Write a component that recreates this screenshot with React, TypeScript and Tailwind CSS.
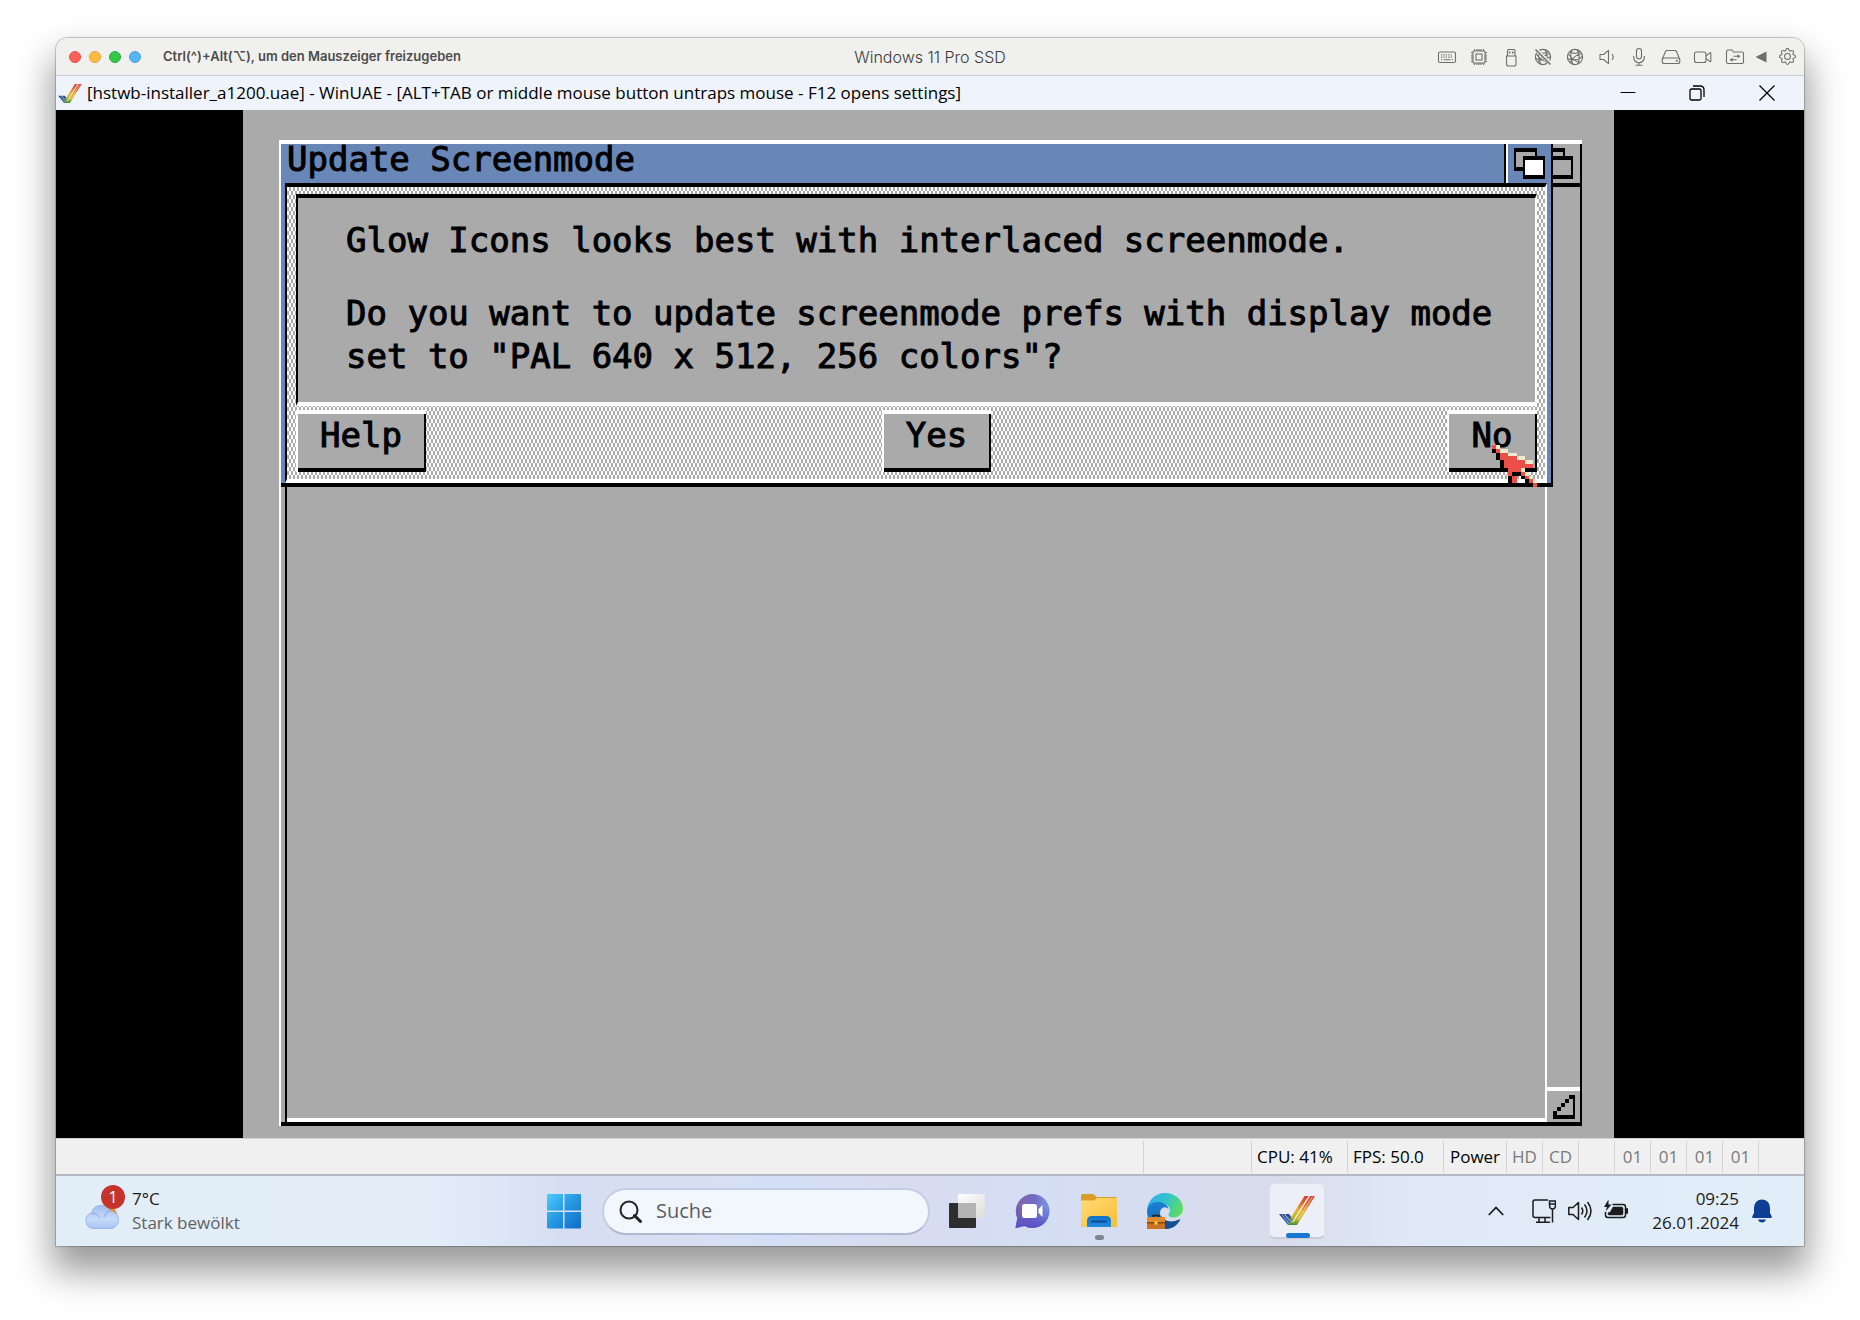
import React from "react";
import { BsGear } from "react-icons/bs";

const STATUS_CELLS = [
  { id: "spare", text: "", cls: "w-[108px]" },
  { id: "cpu", text: "CPU: 41%", cls: "w-24 pl-[5px] text-black" },
  { id: "fps", text: "FPS: 50.0", cls: "w-24 pl-[5px] text-black" },
  { id: "power", text: "Power", cls: "w-[63px] justify-center text-black" },
  { id: "hd", text: "HD", cls: "w-9 justify-center text-[#7a7a7a]" },
  { id: "cd", text: "CD", cls: "w-9 justify-center text-[#7a7a7a]" },
  { id: "gap", text: "", cls: "w-9" },
  { id: "df0", text: "01", cls: "w-9 justify-center text-[#7a7a7a]" },
  { id: "df1", text: "01", cls: "w-9 justify-center text-[#7a7a7a]" },
  { id: "df2", text: "01", cls: "w-9 justify-center text-[#7a7a7a]" },
  { id: "df3", text: "01", cls: "w-9 justify-center text-[#7a7a7a]" },
  { id: "end", text: "", cls: "w-[46px]" },
];

// k = black, r = red, c = cream
const POINTER = [
  "rc",
  "krcc",
  ".krrcc",
  ".krrrrcc",
  "..krrrrrcc",
  "..krrrrrrr",
  "...krrrc",
  "....rkkrc",
  "....kr.krc",
  "....kr..krc",
  "....k....kr",
];
const POINTER_FILL: any = { k: "#000", r: "#eb4f48", c: "#eeeacb" };

const MousePointer = () => (
  <svg
    className="absolute top-[35px] left-[45px] z-20 pointer-events-none"
    width="45"
    height="42"
    viewBox="0 0 11 11"
    preserveAspectRatio="none"
    shapeRendering="crispEdges"
  >
    {POINTER.map((row, y) =>
      row.split("").map((p, x) =>
        p === "." ? null : (
          <rect key={`${x}-${y}`} x={x} y={y} width="1" height="1" fill={POINTER_FILL[p]} />
        ),
      ),
    )}
  </svg>
);

const AmigaCheck = ({ id, className }: { id: string; className: string }) => (
  <svg className={className} viewBox="0 0 36 29">
    <defs>
      <linearGradient id={`${id}-r`} x1="0" y1="0" x2="0" y2="1">
        <stop offset="0" stopColor="#d63a2f" />
        <stop offset="0.3" stopColor="#e0702f" />
        <stop offset="0.55" stopColor="#e2b62f" />
        <stop offset="0.8" stopColor="#c9b62c" />
        <stop offset="1" stopColor="#3f8f2c" />
      </linearGradient>
      <linearGradient id={`${id}-l`} x1="0" y1="0" x2="1" y2="1">
        <stop offset="0" stopColor="#27307a" />
        <stop offset="0.6" stopColor="#2f62a8" />
        <stop offset="1" stopColor="#2f8a5a" />
      </linearGradient>
    </defs>
    <path d="M0 18h5l9 11h-5z" fill={`url(#${id}-l)`} />
    <path d="M6 18h4l4 5-2 3z" fill={`url(#${id}-l)`} />
    <path d="M25.500 0h4L13 26l-2-3z" fill={`url(#${id}-r)`} />
    <path d="M31 0h5L18 29H9l3-3h2z" fill={`url(#${id}-r)`} />
    <path d="M2.500 18l8 10M30.200 0.500L14 26.500M33.500 0.500L19 24" stroke="#fff" strokeWidth="0.700" fill="none" opacity="0.700" />
  </svg>
);

const GLOBE = (
  <>
    <circle cx="10" cy="10" r="7.600" />
    <path d="M4.500 5c2 1 4 1.500 6 1.300 2.200-.2 4-1 5.400-2M2.500 11.500c3 1.500 6 1.800 9 1 2.500-.6 4.600-1.700 6-3.200M7 3c-1.800 4-1.500 9.500 1 14.400M12 2.700c2.500 4 2.800 9 .8 14M3.500 7c3 4.500 7 7.600 12 8.300M16.800 6.800c-4 .5-9 3.700-11.800 8.800" />
  </>
);

const BAR_ICONS = [
  {
    label: "Tastatur",
    art: (
      <>
        <rect x="1.500" y="5" width="17" height="10.500" rx="1.500" />
        <path d="M4 7.800h12M4 10.200h12" strokeDasharray="1.200 1.200" strokeWidth="1.300" />
        <path d="M4 12.800h1.200M6.500 12.800h7M14.800 12.800h1.200" />
      </>
    ),
  },
  {
    label: "Prozessor",
    art: (
      <>
        <rect x="4" y="4" width="12" height="12" rx="1" />
        <rect x="7" y="7" width="6" height="6" />
        <path d="M5.500 2v2M8 2v2M10 2v2M12 2v2M14.500 2v2M5.500 16v2M8 16v2M10 16v2M12 16v2M14.500 16v2M2 5.500h2M2 8h2M2 10h2M2 12h2M2 14.500h2M16 5.500h2M16 8h2M16 10h2M16 12h2M16 14.500h2" />
      </>
    ),
  },
  {
    label: "USB",
    art: (
      <>
        <path d="M6.500 9V3.500a1 1 0 0 1 1-1h5.500a1 1 0 0 1 1 1V9" />
        <path d="M8.700 4.500v2M11.800 4.500v2" strokeWidth="1.600" />
        <path d="M5.500 9h9.500v8a2 2 0 0 1-2 2H7.500a2 2 0 0 1-2-2z" />
      </>
    ),
  },
  {
    label: "Netzwerk getrennt",
    art: (
      <>
        {GLOBE}
        <path d="M3 2.500l15 15" stroke="#f0f0ee" strokeWidth="3.500" />
        <path d="M2.500 2.500l15 15" strokeWidth="1.500" />
      </>
    ),
  },
  { label: "Netzwerk", art: GLOBE },
  {
    label: "Ton",
    art: (
      <>
        <path d="M3 7.500h3.500L11.500 3.300v13.400L6.500 12.500H3z" strokeLinejoin="round" />
        <path d="M15 7c1.600 2 1.600 4 0 6" />
      </>
    ),
  },
  {
    label: "Mikrofon",
    art: (
      <>
        <rect x="7.500" y="1.500" width="5" height="10.500" rx="2.500" />
        <path d="M4.700 9v1.500a5.300 5.300 0 0 0 10.600 0V9M10 15.800v2.500M6.500 18.300h7" />
      </>
    ),
  },
  {
    label: "Festplatte",
    art: (
      <>
        <path d="M1.200 12.500L4.500 4.500q.4-1 1.500-1h8q1.100 0 1.500 1l3.300 8" />
        <rect x="1.200" y="11" width="17.600" height="5.500" rx="2" />
        <circle cx="15.800" cy="13.800" r="0.500" />
      </>
    ),
  },
  {
    label: "Kamera",
    art: (
      <>
        <rect x="1.500" y="5" width="11.500" height="10.500" rx="2" />
        <path d="M13 9l4-3.300q.8-.4.800.5v8q0 .9-.8.400L13 11.500" />
      </>
    ),
  },
  {
    label: "Freigegebene Ordner",
    art: (
      <>
        <path d="M1.500 15V4.500q0-1.500 1.500-1.500h4l1.500 2H17q1.500 0 1.500 1.500V15q0 1.500-1.500 1.500H3Q1.500 16.500 1.500 15z" />
        <path d="M8.500 9.300h5.500M6 12.700h5.500" />
        <path d="M12.500 7.300l3 2-3 2zM7.500 10.700l-3 2 3 2z" fill="#6e6e6c" strokeWidth="0" />
      </>
    ),
  },
];

const DepthGadget = ({ front, back }: { front: string; back: string }) => (
  <svg width="31" height="31" viewBox="0 0 31 31" shapeRendering="crispEdges">
    <rect width="23" height="23" fill="#000" />
    <rect x="2" y="4" width="19" height="15" fill={back} />
    <rect x="9" y="8" width="22" height="23" fill="#000" />
    <rect x="11" y="12" width="18" height="15" fill={front} />
  </svg>
);

const MacBar = () => (
  <header className="flex h-[38px] shrink-0 items-center border-b border-[#c9ccd3] bg-[#f0f0ee] font-['Inter',sans-serif]">
    <div className="flex flex-1 items-center">
      <div className="ml-[13px] flex gap-2">
        <button aria-label="Schließen" className="size-3 rounded-full border border-[#e0544d] bg-[#fe5f57]" />
        <button aria-label="Minimieren" className="size-3 rounded-full border border-[#e0a63a] bg-[#fdbd41]" />
        <button aria-label="Vollbild" className="size-3 rounded-full border border-[#2cab3c] bg-[#34c84a]" />
        <button aria-label="Coherence" className="size-3 rounded-full border border-[#4aa2dd] bg-[#55b5f5]" />
      </div>
      <span className="pl-[22px] text-[13px] font-semibold whitespace-nowrap text-[#4b4b49]">
        Ctrl(^)+Alt(⌥), um den Mauszeiger freizugeben
      </span>
    </div>
    <h1 className="text-base font-light text-[#3c3c3c]">Windows 11 Pro SSD</h1>
    <div className="flex flex-1 items-center justify-end text-[#6e6e6c]">
      {BAR_ICONS.map((i) => (
        <button key={i.label} aria-label={i.label} className="flex w-8 justify-center">
          <svg className="size-5" viewBox="0 0 20 20" fill="none" stroke="currentColor" strokeWidth="1.100">
            {i.art}
          </svg>
        </button>
      ))}
      <button aria-label="Einklappen" className="flex w-5 justify-center">
        <svg className="size-3" viewBox="0 0 12 12">
          <path d="M0.500 6L11.500 0.500v11z" fill="currentColor" />
        </svg>
      </button>
      <button aria-label="Einstellungen" className="mr-px flex w-8 justify-center">
        <BsGear className="size-[17px]" />
      </button>
    </div>
  </header>
);

const UaeTitleBar = () => (
  <div className="flex h-[34px] shrink-0 items-center justify-between bg-[#eff3fb]">
    <div className="flex items-center gap-[5px] pl-[2px]">
      <AmigaCheck id="title" className="h-[19px] w-6" />
      <h2 className="text-[17px] leading-6 whitespace-nowrap text-black">
        [hstwb-installer_a1200.uae] - WinUAE - [ALT+TAB or middle mouse button untraps mouse - F12 opens settings]
      </h2>
    </div>
    <div className="flex pr-[2px] text-black">
      <button aria-label="Minimieren" className="flex h-8 w-[69px] items-center justify-center">
        <svg width="16" height="16" viewBox="0 0 16 16" stroke="currentColor"><path d="M0.500 7.500h15" /></svg>
      </button>
      <button aria-label="Wiederherstellen" className="flex h-8 w-[70px] items-center justify-center">
        <svg width="16" height="16" viewBox="0 0 16 16" fill="none" stroke="currentColor" strokeWidth="1.300">
          <rect x="1" y="4" width="11" height="11" rx="1.500" />
          <path d="M4 1h7.500A3.500 3.500 0 0 1 15 4.500V12" />
        </svg>
      </button>
      <button aria-label="Schließen" className="flex h-8 w-[70px] items-center justify-center">
        <svg width="16" height="16" viewBox="0 0 16 16" stroke="currentColor" strokeWidth="1.300"><path d="M0.500 0.500l15 15M15.500 0.500l-15 15" /></svg>
      </button>
    </div>
  </div>
);

const AmigaButton = ({ children, className }: { children: React.ReactNode; className: string }) => (
  <div className={`relative ${className}`}>
    <button className="flex h-[62px] w-full border-t-4 border-l-2 border-white leading-[43px]">
      <span className="flex h-full flex-1 justify-center border-r-2 border-b-4 border-black bg-[#aaaaaa]">
        {children}
      </span>
    </button>
    {children === "No" && <MousePointer />}
  </div>
);

const Requester = () => (
  <section
    role="dialog"
    aria-label="Update Screenmode"
    className="absolute -top-1 right-[29px] -left-[2px] border-t-4 border-l-2 border-white bg-[#6887b7]"
  >
    <div className="border-r-2 border-b-4 border-black">
      <div className="flex h-[39px] justify-between">
        <h3 className="pl-[6px] leading-[31px]">Update Screenmode</h3>
        <button aria-label="Depth" className="flex border-l-2 border-black">
          <span className="flex h-full w-[45px] border-l-2 border-white pt-1 pl-[6px]">
            <DepthGadget back="#aaaaaa" front="#ffffff" />
          </span>
        </button>
      </div>
      <div className="mr-1 ml-1 border-t-4 border-r-2 border-b-4 border-l-2 border-t-black border-r-white border-b-white border-l-black bg-[conic-gradient(#aaaaaa_25%,#ffffff_0_50%,#aaaaaa_0_75%,#ffffff_0)] bg-[length:4px_8px] pt-[7px] pr-2 pb-[7px] pl-[9px]">
        <div className="mb-1 border-t-4 border-r-2 border-b-4 border-l-2 border-t-black border-r-white border-b-white border-l-black bg-[#aaaaaa] pt-[21px] pb-6 pl-12 leading-[43px]">
          <p>Glow Icons looks best with interlaced screenmode.</p>
          <p className="pt-[30px]">
            Do you want to update screenmode prefs with display mode
            <br />
            set to "PAL 640 x 512, 256 colors"?
          </p>
        </div>
        <div className="flex justify-between">
          <AmigaButton className="w-[130px]">Help</AmigaButton>
          <AmigaButton className="w-[109px]">Yes</AmigaButton>
          <AmigaButton className="w-[90px]">No</AmigaButton>
        </div>
      </div>
    </div>
  </section>
);

const AmigaScreen = () => (
  <main className="flex min-h-0 flex-1 bg-black pr-[190px] pl-[187px]">
    <div className="flex flex-1 bg-[#aaaaaa] pt-[30px] pr-8 pb-3 pl-9 font-['DejaVu_Sans_Mono',monospace] text-[34px] whitespace-nowrap text-black [-webkit-text-stroke:1px_black]">
      <div className="relative flex flex-1 border-t-4 border-l-2 border-white">
        <div className="flex flex-1 flex-col border-r-2 border-b-4 border-black">
          <div className="flex h-[43px] shrink-0 justify-end border-b-4 border-black pt-1 pr-[7px]">
            <DepthGadget back="#aaaaaa" front="#aaaaaa" />
          </div>
          <div className="flex flex-1 pl-1">
            <div className="flex flex-1 border-l-2 border-black">
              <div className="flex-1 border-r-2 border-b-4 border-white" />
            </div>
            <div className="flex w-[33px] flex-col justify-end">
              <button aria-label="Size" className="flex h-[35px] justify-center border-t-4 border-white pt-1">
                <svg width="22" height="24" viewBox="0 0 22 24" shapeRendering="crispEdges">
                  <path d="M16 0h6v24H0v-8h4v-4h4v-4h4V4h4zM16 4h4v16H4v-4h4v-4h4V8h4z" fill="#000" fillRule="evenodd" />
                </svg>
              </button>
            </div>
          </div>
        </div>
        <Requester />
      </div>
    </div>
  </main>
);

const StatusBar = () => (
  <div className="flex h-[38px] shrink-0 justify-end border-t border-b-2 border-t-[#d0d0d0] border-b-[#b2b9c4] bg-[#f0f0f0] pt-[2px] pb-px text-[17px]">
    {STATUS_CELLS.map((c) => (
      <div key={c.id} className={`flex items-center border-l border-[#d4d4d4] whitespace-nowrap ${c.cls}`}>
        {c.text}
      </div>
    ))}
  </div>
);

const WeatherIcon = () => (
  <svg className="h-10 w-10" viewBox="0 0 40 40">
    <defs>
      <linearGradient id="cloud" x1="0" y1="0" x2="0" y2="1">
        <stop offset="0" stopColor="#9dbcf0" />
        <stop offset="0.600" stopColor="#c8dbf7" />
        <stop offset="1" stopColor="#a9c4f4" />
      </linearGradient>
    </defs>
    <circle cx="25" cy="24" r="9" fill="#f28a1e" />
    <path d="M9.500 37.500a8 8 0 0 1-1-15.500 10 10 0 0 1 18.500-2.500 9.200 9.200 0 0 1 2 18z" fill="url(#cloud)" stroke="#8eabe6" strokeWidth="0.800" />
    <path d="M8.500 22.500a8 8 0 0 1 8 4M21 26a8.500 8.500 0 0 1 6-6" fill="none" stroke="#86a4e0" strokeWidth="0.900" />
  </svg>
);

const TaskViewIcon = () => (
  <svg className="size-9" viewBox="0 0 36 36">
    <defs>
      <linearGradient id="tv" x1="0" y1="0" x2="1" y2="1">
        <stop offset="0" stopColor="#ffffff" />
        <stop offset="1" stopColor="#dcdcdc" />
      </linearGradient>
    </defs>
    <rect x="0" y="10" width="27" height="25" rx="1" fill="#2e2e2e" />
    <rect x="9" y="1" width="27" height="24" rx="1" fill="url(#tv)" />
    <rect x="9" y="10" width="18" height="15" fill="#b4b4b4" />
  </svg>
);

const ChatIcon = () => (
  <svg className="size-9" viewBox="0 0 36 36">
    <defs>
      <linearGradient id="chat" x1="0" y1="0" x2="1" y2="0.300">
        <stop offset="0" stopColor="#8a62a8" />
        <stop offset="0.550" stopColor="#6f6bc4" />
        <stop offset="1" stopColor="#7d9ae8" />
      </linearGradient>
      <linearGradient id="chat2" x1="0" y1="0" x2="0" y2="1">
        <stop offset="0.300" stopColor="#5a4fc4" stopOpacity="0" />
        <stop offset="1" stopColor="#5a4fc4" />
      </linearGradient>
    </defs>
    <path d="M17.500 1a17 17 0 1 1-8 32L0.500 35l1.800-10A17 17 0 0 1 17.500 1z" fill="url(#chat)" />
    <path d="M17.500 1a17 17 0 1 1-8 32L0.500 35l1.800-10A17 17 0 0 1 17.500 1z" fill="url(#chat2)" />
    <rect x="7" y="11" width="15" height="14" rx="2.500" fill="#fff" />
    <path d="M23.500 16l4-4v12l-4-4z" fill="#fff" />
  </svg>
);

const FolderIcon = () => (
  <svg className="size-9" viewBox="0 0 36 36">
    <defs>
      <linearGradient id="fold" x1="0" y1="0" x2="1" y2="1">
        <stop offset="0" stopColor="#ffdc78" />
        <stop offset="1" stopColor="#f7bd35" />
      </linearGradient>
      <linearGradient id="fold2" x1="0" y1="0" x2="0" y2="1">
        <stop offset="0" stopColor="#1272c4" />
        <stop offset="1" stopColor="#1f8be0" />
      </linearGradient>
    </defs>
    <path d="M0 3q0-2 2-2h9q1.500 0 2.500 1l2 2H34q2 0 2 2v4H0z" fill="#dc9c28" />
    <path d="M0 7.500h12q1.500 0 2.500-1l1.500-1.500h20v29H0z" fill="url(#fold)" />
    <path d="M6 34v-6q0-5 5-5h14q5 0 5 5v6z" fill="url(#fold2)" />
    <path d="M11 28.500h14" stroke="#0b4f93" strokeWidth="1.800" strokeLinecap="round" />
  </svg>
);

const EdgeIcon = () => (
  <svg className="size-9" viewBox="0 0 36 36">
    <defs>
      <linearGradient id="edge-top" x1="0" y1="0.300" x2="1" y2="0.600">
        <stop offset="0" stopColor="#2fb0ee" />
        <stop offset="0.500" stopColor="#33c4c8" />
        <stop offset="1" stopColor="#62dd5a" />
      </linearGradient>
      <linearGradient id="edge-mid" x1="0" y1="0" x2="0" y2="1">
        <stop offset="0" stopColor="#1c7fd4" />
        <stop offset="1" stopColor="#1465b4" />
      </linearGradient>
    </defs>
    <path d="M0 18C0 8 8 0 18 0s18 7 18 15.500C36 21 32 24.500 27 24.500c-4 0-6.500-1.500-5-4 2.200-3.500.5-8-4-9.500C10 8.500 2 11 0 18z" fill="url(#edge-top)" />
    <path d="M0 18c1-6.500 6.500-9.500 12-9 5.500.3 9 3.500 9.500 7-5-4.500-10 1-8 6.500C15.500 29 22 33 30 31c-3 3.500-7 5-12 5C8 36 0 28 0 18z" fill="url(#edge-mid)" />
    <path d="M14 22c1.500 4.500 7 7 12 6.300 3-.4 5-1.300 7.500-2.300C31 32 25.500 36 18 36c-3 0-4-8-4-14z" fill="#174f93" />
    <path d="M6 24v-1.500h6V24" fill="none" stroke="#222" strokeWidth="1.500" />
    <rect x="0" y="24" width="18" height="12" fill="#c8731f" />
    <rect x="0" y="24" width="18" height="5" fill="#e08c2c" />
    <rect x="0" y="29" width="18" height="1.500" fill="#8a4511" />
    <rect x="7.500" y="28.500" width="3" height="3" fill="#ffd84a" />
  </svg>
);

const Taskbar = () => (
  <footer className="flex h-[70px] shrink-0 items-center bg-linear-[90deg,#e2eef7_0%,#e2edf8_22%,#d6def3_29%,#d9dff2_36%,#d4e0f8_41%,#d8dcef_48%,#d4def4_56%,#d8dcea_70%,#e0eaf6_78%,#e1eef8_100%] text-[17px] whitespace-nowrap">
    <div className="flex flex-1 items-center">
      <button className="flex items-center gap-2 pl-[27px] text-left">
        <span className="relative flex w-[41px] justify-start">
          <WeatherIcon />
          <span className="absolute -top-[6px] -right-px flex size-6 items-center justify-center rounded-full bg-[#c4342b] text-base text-white">
            1
          </span>
        </span>
        <span className="leading-6">
          <span className="block text-[#1b1b1b]">7°C</span>
          <span className="block text-[#5d6166]">Stark bewölkt</span>
        </span>
      </button>
    </div>
    <nav className="ml-[11px] flex items-center">
      <button aria-label="Start">
        <svg className="size-9" viewBox="0 0 36 36">
          <defs>
            <linearGradient id="win" gradientUnits="userSpaceOnUse" x1="0" y1="0" x2="36" y2="36">
              <stop offset="0" stopColor="#4fd0ff" />
              <stop offset="0.500" stopColor="#2597e0" />
              <stop offset="1" stopColor="#0f68c8" />
            </linearGradient>
          </defs>
          <path d="M2 1h15v16.500H1V2q0-1 1-1zM18.500 1H34q1 0 1 1v15.500H18.500zM1 19h16v16.500H2q-1 0-1-1zM18.500 19H35v15.500q0 1-1 1H18.500z" fill="url(#win)" />
        </svg>
      </button>
      <label className="ml-5 flex h-[47px] w-[328px] items-center rounded-full border-2 border-[#c3cde4] border-b-[#afb9d0] bg-[#f2f6fd] pl-[14px]">
        <svg className="size-6 shrink-0" viewBox="0 0 24 24" fill="none" stroke="#222" strokeWidth="2">
          <circle cx="11" cy="11" r="8.500" />
          <path d="M16.500 16.500l6 6" strokeWidth="3" strokeLinecap="round" />
        </svg>
        <input
          type="text"
          aria-label="Suche"
          placeholder="Suche"
          className="ml-[14px] w-full bg-transparent text-xl outline-none placeholder:text-[#5b5d62]"
        />
      </label>
      <button aria-label="Taskansicht" className="ml-[19px]"><TaskViewIcon /></button>
      <button aria-label="Chat" className="ml-[30px]"><ChatIcon /></button>
      <button aria-label="Explorer" className="relative ml-[30px]">
        <FolderIcon />
        <span className="absolute -bottom-[11px] left-[14px] h-[5px] w-[9px] rounded-full bg-[#80848e]" />
      </button>
      <button aria-label="Edge" className="ml-[30px]"><EdgeIcon /></button>
      <button aria-label="WinUAE" className="relative ml-[86px] flex size-14 items-center justify-center rounded-md border border-b-2 border-[#dfe1ea] border-b-[#c9ccd8] bg-[#eceff7]">
        <AmigaCheck id="task" className="h-[29px] w-9" />
        <span className="absolute -bottom-px left-4 h-[5px] w-6 rounded-full bg-[#1676d2]" />
      </button>
    </nav>
    <div className="flex flex-1 items-center justify-end text-[#1b1b1b]">
      <button aria-label="Ausgeblendete Symbole" className="mr-7">
        <svg className="size-4" viewBox="0 0 16 16" fill="none" stroke="currentColor" strokeWidth="1.800"><path d="M0.800 12L8 4.500l7.200 7.500" /></svg>
      </button>
      <button aria-label="Netzwerk, Lautstärke und Akku" className="mr-6 flex gap-3">
        <svg className="size-6" viewBox="0 0 24 24" fill="none" stroke="currentColor" strokeWidth="1.500">
          <path d="M16 1H3Q1 1 1 3v13.500q0 2 2 2h15.500M7 18.500v4.500M13 18.500v4.500M4 23.200h14" />
          <path d="M17.500 6V2h6v4q0 4-3 4t-3-4zM17.500 5h6M20.500 10v13.500" />
        </svg>
        <svg className="size-6" viewBox="0 0 24 24" fill="none" stroke="currentColor" strokeWidth="1.500" strokeLinejoin="round">
          <path d="M0.800 8.500H5l5.500-5v17L5 15.500H0.800z" />
          <path d="M13.500 8.500q2.500 3.500 0 7M16.500 5.500q5 6.500 0 13M19.500 3q7 9 0 18" />
        </svg>
        <svg className="size-6" viewBox="0 0 24 24" fill="none" stroke="currentColor" strokeWidth="1.500">
          <path d="M8.500 5.500H19q2.500 0 2.500 2.500v8q0 2.500-2.500 2.500H4q-2.500 0-2.500-2.500v-3" />
          <path d="M9 8h8.500q1.500 0 1.500 1.500v5q0 1.500-1.500 1.500H4.500L4 13.500h2z" fill="currentColor" strokeWidth="0.500" />
          <path d="M22 9.500h2v5h-2z" fill="currentColor" strokeWidth="0.500" />
          <path d="M4.500 0.500L0 8h3L1.500 12.500 7.500 5.500h-3z" fill="currentColor" strokeWidth="0" />
        </svg>
      </button>
      <button className="mr-[13px] text-right leading-6">
        <time className="block">09:25</time>
        <time className="block">26.01.2024</time>
      </button>
      <button aria-label="Benachrichtigungen" className="mr-8">
        <svg className="h-6 w-5" viewBox="0 0 20 24" fill="#0c3f94">
          <path d="M10 0.500a8 8 0 0 1 8 8V14l1.800 3.500q.3 1.500-1 1.500H1.200q-1.300 0-1-1.500L2 14V8.500a8 8 0 0 1 8-8zM6 20.500h8q-1 3-4 3t-4-3z" />
        </svg>
      </button>
    </div>
  </footer>
);

export default function App() {
  return (
    <div className="flex h-screen bg-white px-14 pt-[38px] pb-[74px] font-['Open_Sans',sans-serif]">
      <div className="flex flex-1 flex-col overflow-hidden rounded-t-xl shadow-[0_0_1px_1px_rgba(0,0,0,0.22),0_22px_36px_4px_rgba(0,0,0,0.40)]">
        <MacBar />
        <UaeTitleBar />
        <AmigaScreen />
        <StatusBar />
        <Taskbar />
      </div>
    </div>
  );
}
